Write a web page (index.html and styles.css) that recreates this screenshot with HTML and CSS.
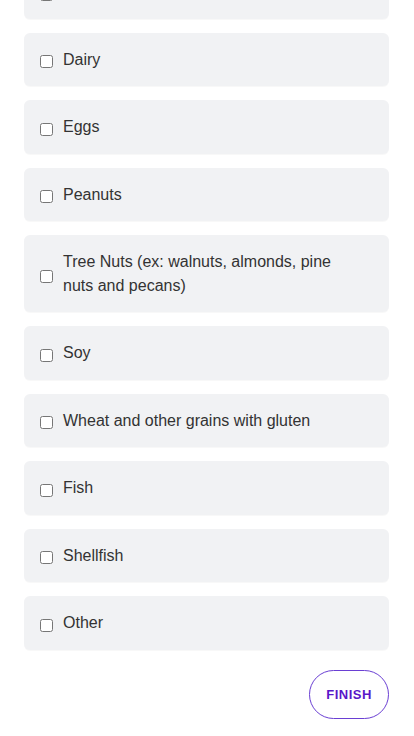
FILE: index.html
```html
<!DOCTYPE html>
<html lang="en">
<head>
<meta charset="utf-8">
<link rel="stylesheet" href="styles.css">
</head>
<body>
<main class="page">
  <form class="list">
    <label class="option"><input type="checkbox" class="box"><span class="text">Milk</span></label>
    <label class="option"><input type="checkbox" class="box"><span class="text">Dairy</span></label>
    <label class="option"><input type="checkbox" class="box"><span class="text">Eggs</span></label>
    <label class="option"><input type="checkbox" class="box"><span class="text">Peanuts</span></label>
    <label class="option"><input type="checkbox" class="box"><span class="text">Tree Nuts (ex: walnuts, almonds, pine nuts and pecans)</span></label>
    <label class="option"><input type="checkbox" class="box"><span class="text">Soy</span></label>
    <label class="option"><input type="checkbox" class="box"><span class="text">Wheat and other grains with gluten</span></label>
    <label class="option"><input type="checkbox" class="box"><span class="text">Fish</span></label>
    <label class="option"><input type="checkbox" class="box"><span class="text">Shellfish</span></label>
    <label class="option"><input type="checkbox" class="box"><span class="text">Other</span></label>
  </form>
  <div class="actions">
    <button type="button" class="finish">FINISH</button>
  </div>
</main>
</body>
</html>
```
FILE: styles.css
```css
html, body {
  margin: 0;
  padding: 0;
  background: #ffffff;
}
body {
  font-family: "Liberation Sans", Arial, sans-serif;
  color: #333333;
}
.page {
  padding: 0 25px 0 24px;
  margin-top: -35px;
}
.list {
  display: flex;
  flex-direction: column;
  gap: 14px;
}
.option {
  display: flex;
  align-items: center;
  background: #f1f2f4;
  border-radius: 6px;
  padding: 15px 16px 15px 16px;
  box-shadow: 0 1px 1px rgba(0, 0, 0, 0.03);
  font-size: 16px;
  line-height: 23.5px;
  cursor: pointer;
}
.box {
  width: 13px;
  height: 13px;
  margin: 5px 10px 0 0;
  flex: none;
}
.text {
  flex: 1;
  padding-right: 40px;
}
.actions {
  display: flex;
  justify-content: flex-end;
  padding-top: 20px;
}
.finish {
  width: 80px;
  height: 49px;
  border: 1px solid #6a3fd3;
  border-radius: 25px;
  background: #ffffff;
  color: #5a16c9;
  font-family: "Liberation Sans", Arial, sans-serif;
  font-weight: bold;
  font-size: 13px;
  letter-spacing: 0.5px;
  padding: 0;
}
```
